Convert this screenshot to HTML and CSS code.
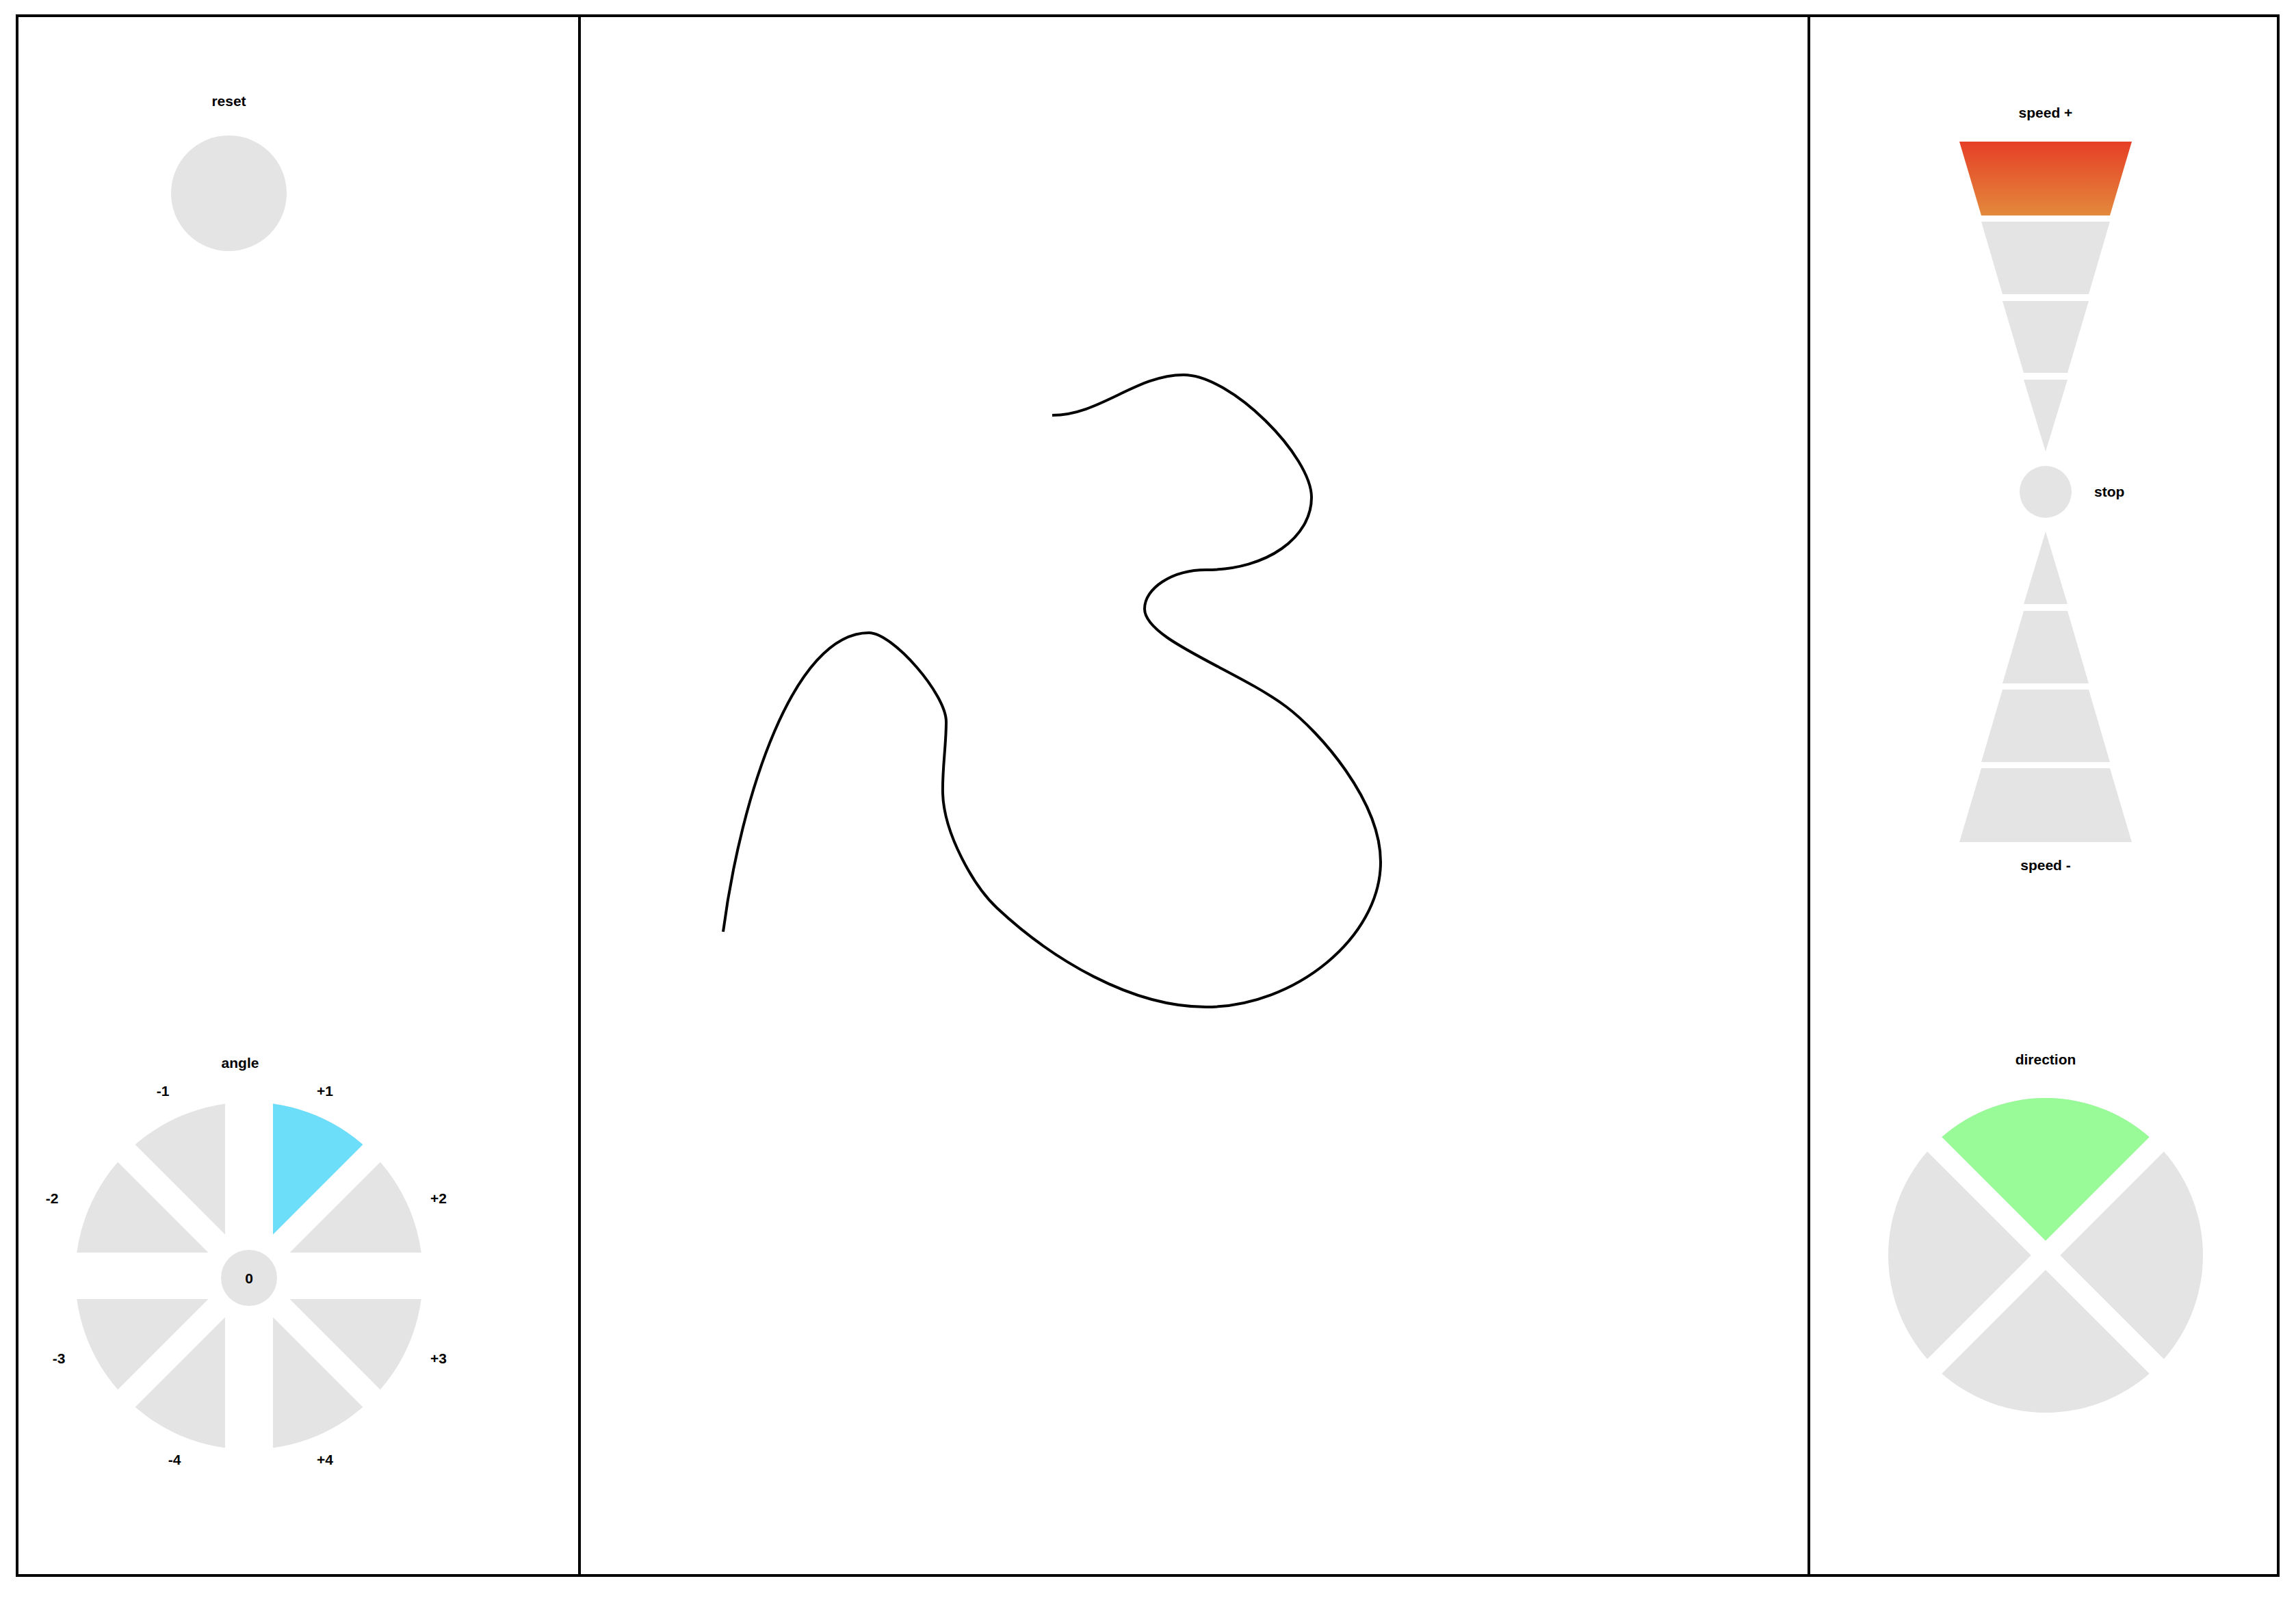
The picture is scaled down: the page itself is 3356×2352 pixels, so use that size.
FILE: index.html
```html
<!DOCTYPE html>
<html lang="en">
<head>
  <meta charset="UTF-8">
  <title>controller</title>
  <link rel="stylesheet" href="styles.css">
</head>
<body>
  <div class="frame">

    <section class="panel panel-left">
      <div class="reset">
        <div class="label">reset</div>
        <div class="reset-btn"></div>
      </div>

      <div class="angle">
        <div class="label angle-title">angle</div>
        <div class="dial">
          <svg width="620" height="600" viewBox="0 0 620 600">
            <circle cx="311" cy="299" r="254" fill="#e4e4e4"/>
            <path d="M311 299 L311 45 A254 254 0 0 1 490.6 119.4 Z" fill="#6cdefa"/>
            <rect x="276" y="30" width="70" height="540" fill="#fff"/>
            <rect x="40" y="265" width="542" height="68" fill="#fff"/>
            <rect x="31" y="281" width="560" height="36" fill="#fff" transform="rotate(45 311 299)"/>
            <rect x="31" y="281" width="560" height="36" fill="#fff" transform="rotate(-45 311 299)"/>
            <circle cx="311" cy="302" r="41" fill="#e4e4e4"/>
          </svg>
          <span class="tick t-m1">-1</span>
          <span class="tick t-p1">+1</span>
          <span class="tick t-m2">-2</span>
          <span class="tick t-p2">+2</span>
          <span class="tick t-m3">-3</span>
          <span class="tick t-p3">+3</span>
          <span class="tick t-m4">-4</span>
          <span class="tick t-p4">+4</span>
          <span class="tick t-zero">0</span>
        </div>
      </div>
    </section>

    <section class="panel panel-mid">
      <svg class="track" viewBox="849 25 1793 2276">
        <path d="M1057 1362
          C1083 1164 1160 925 1270 925
          C1305 925 1383 1015 1383 1055
          C1383 1090 1377 1125 1378 1160
          C1380 1220 1424 1296 1457 1327
          C1537 1402 1653 1472 1763 1472
          C1893 1472 2018 1370 2018 1260
          C2018 1170 1928 1069 1880 1033
          C1808 979 1673 935 1673 890
          C1673 860 1713 833 1763 833
          C1853 833 1917 785 1917 727
          C1917 667 1800 548 1730 548
          C1660 548 1608 607 1538 607"
          fill="none" stroke="#000" stroke-width="4"/>
      </svg>
    </section>

    <section class="panel panel-right">
      <div class="speed">
        <div class="label">speed +</div>
        <svg class="funnel funnel-up" width="252" height="453" viewBox="0 0 252 453">
          <defs>
            <linearGradient id="heat" x1="0" y1="0" x2="0" y2="1">
              <stop offset="0" stop-color="#e63f26"/>
              <stop offset="1" stop-color="#e3893c"/>
            </linearGradient>
          </defs>
          <polygon points="0,0 252,0 220,108 32,108" fill="url(#heat)"/>
          <polygon points="32,117 220,117 189,223 63,223" fill="#e4e4e4"/>
          <polygon points="63,233 189,233 158,338 94,338" fill="#e4e4e4"/>
          <polygon points="94,348 158,348 126,453" fill="#e4e4e4"/>
        </svg>
        <div class="stop"><span class="label stop-label">stop</span></div>
        <svg class="funnel funnel-down" width="252" height="454" viewBox="0 0 252 454">
          <polygon points="126,0 158,106 94,106" fill="#e4e4e4"/>
          <polygon points="94,116 158,116 189,222 63,222" fill="#e4e4e4"/>
          <polygon points="63,231 189,231 220,337 32,337" fill="#e4e4e4"/>
          <polygon points="32,346 220,346 252,454 0,454" fill="#e4e4e4"/>
        </svg>
        <div class="label speed-down">speed -</div>
      </div>

      <div class="direction">
        <div class="label">direction</div>
        <svg class="pad" width="460" height="460" viewBox="0 0 460 460">
          <circle cx="230" cy="230" r="230" fill="#e4e4e4"/>
          <path d="M230 230 L67.4 67.4 A230 230 0 0 1 392.6 67.4 Z" fill="#98fb98"/>
          <rect x="-40" y="215" width="540" height="30" fill="#fff" transform="rotate(45 230 230)"/>
          <rect x="-40" y="215" width="540" height="30" fill="#fff" transform="rotate(-45 230 230)"/>
        </svg>
      </div>
    </section>

  </div>
</body>
</html>
```

FILE: styles.css
```css
body {
  margin: 0;
  background: #fff;
  color: #000;
  font-family: 'Liberation Sans', Arial, sans-serif;
}
.frame {
  box-sizing: border-box;
  width: 3309px;
  height: 2284px;
  margin: 21px 0 0 23px;
  border: 4px solid #000;
  display: grid;
  grid-template-columns: 818px 1801px 682px;
}
.label {
  font-size: 21px;
  font-weight: 700;
  line-height: 24px;
  white-space: nowrap;
}

/* left column */
.panel-left {
  display: flex;
  flex-direction: column;
  justify-content: space-between;
  padding: 111px 0 135px;
}
.reset {
  width: 169px;
  margin-left: 223px;
  text-align: center;
}
.reset-btn {
  width: 169px;
  height: 169px;
  margin-top: 38px;
  border-radius: 50%;
  background: #e4e4e4;
}
.angle {
  width: 620px;
  margin-left: 26px;
}
.angle-title {
  text-align: center;
  padding-right: 24px;
}
.dial {
  position: relative;
  width: 620px;
  height: 600px;
}
.dial svg {
  display: block;
}
.tick {
  position: absolute;
  font-size: 21px;
  font-weight: 700;
  line-height: 24px;
  transform: translate(-50%, -50%);
}
.t-m1 { left: 185px; top: 29px; }
.t-p1 { left: 422px; top: 29px; }
.t-m2 { left: 23px; top: 186px; }
.t-p2 { left: 588px; top: 186px; }
.t-m3 { left: 33px; top: 420px; }
.t-p3 { left: 588px; top: 420px; }
.t-m4 { left: 202px; top: 568px; }
.t-p4 { left: 422px; top: 568px; }
.t-zero { left: 311px; top: 303px; }

/* middle column */
.panel-mid {
  border-left: 4px solid #000;
  border-right: 4px solid #000;
}
.track {
  display: block;
  width: 1793px;
  height: 2276px;
}

/* right column */
.panel-right {
  display: flex;
  flex-direction: column;
  justify-content: space-between;
  align-items: center;
  padding: 128px 0 236px 6px;
}
.speed,
.direction {
  display: flex;
  flex-direction: column;
  align-items: center;
}
.funnel {
  display: block;
}
.funnel-up {
  margin-top: 30px;
}
.stop {
  position: relative;
  width: 76px;
  height: 76px;
  margin-top: 21px;
  border-radius: 50%;
  background: #e4e4e4;
}
.stop-label {
  position: absolute;
  left: 109px;
  top: 50%;
  transform: translateY(-50%);
}
.funnel-down {
  margin-top: 20px;
}
.speed-down {
  margin-top: 22px;
}
.pad {
  display: block;
  margin-top: 44px;
}
```
